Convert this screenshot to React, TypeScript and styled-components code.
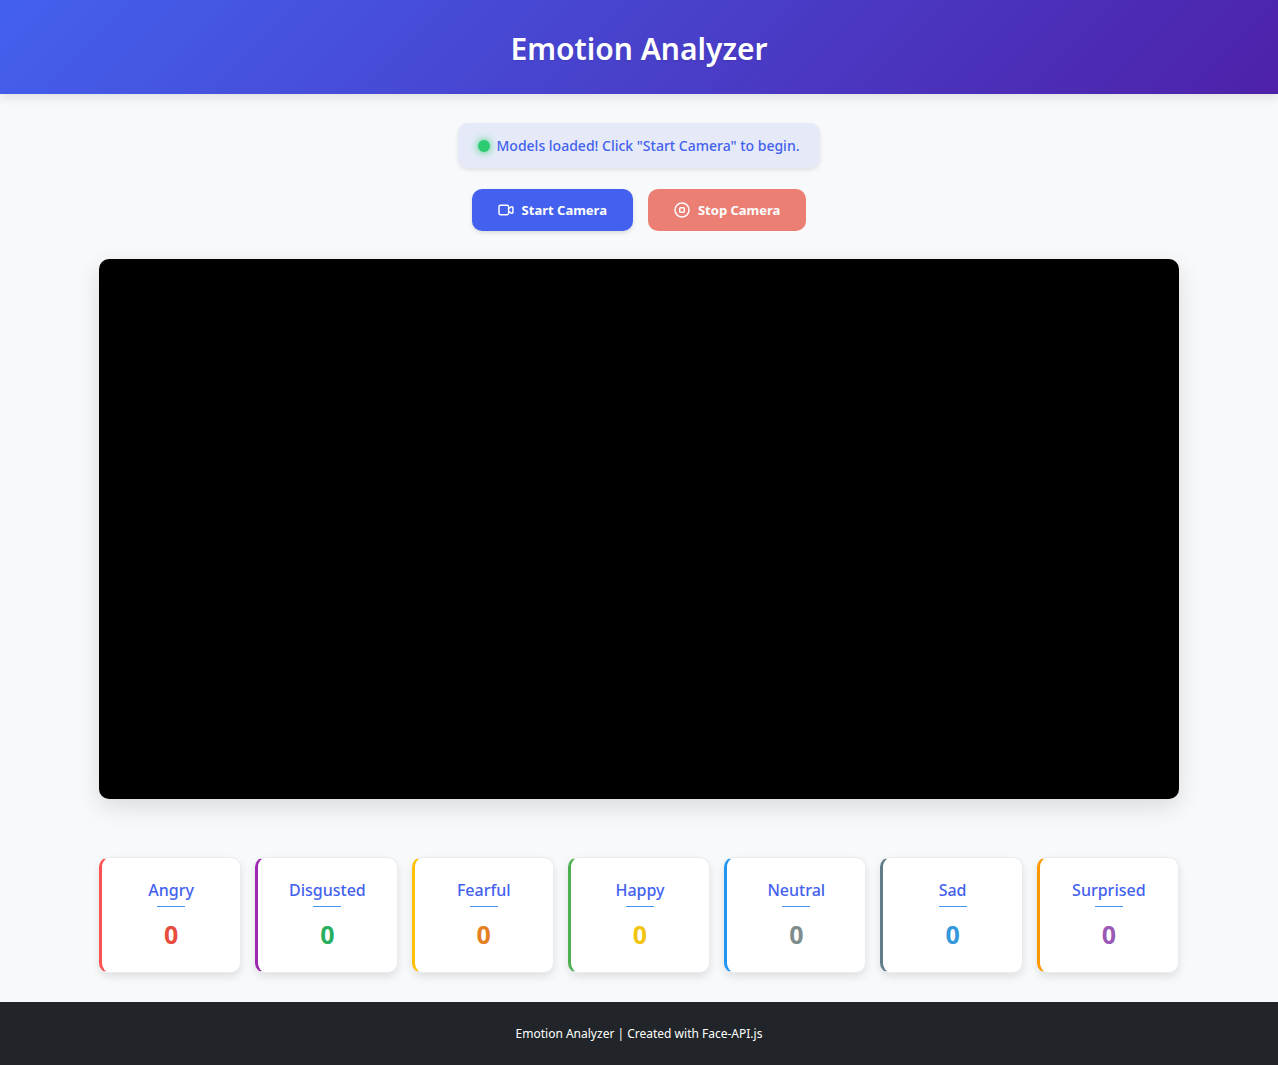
import React from "react";
import styled, { createGlobalStyle } from "styled-components";

const GlobalStyle = createGlobalStyle`
  *, *::before, *::after { box-sizing: border-box; }
  body {
    margin: 0;
    background: #f8f9fb;
    color: #212529;
    font-family: "Segoe UI", "Noto Sans", "Open Sans", sans-serif;
  }
`;

const Page = styled.div`
  min-height: 100vh;
  display: flex;
  flex-direction: column;
`;

const Header = styled.header`
  padding: 29px 20px 25px;
  background: linear-gradient(135deg, #4361ee, #4e21a9);
  box-shadow: 0 4px 10px rgba(0, 0, 0, 0.1);
  text-align: center;
`;

const Title = styled.h1`
  margin: 0;
  color: #fff;
  font-size: 30px;
  font-weight: 600;
  line-height: 40px;
  text-shadow: 0 1px 2px rgba(0, 0, 0, 0.1);
`;

const Main = styled.main`
  flex: 1;
  width: 100%;
  max-width: 1120px;
  margin: 0 auto;
  padding: 29px 20px;
  display: flex;
  flex-direction: column;
  align-items: center;
`;

const Status = styled.div`
  display: flex;
  align-items: center;
  gap: 6px;
  padding: 12px 20px 11px;
  border-radius: 10px;
  background: #e6eaf8;
  box-shadow: 0 2px 4px rgba(0, 0, 0, 0.1);
  color: #4361ee;
  font-size: 14px;
  font-weight: 500;
  line-height: 22px;
`;

const StatusDot = styled.span`
  width: 12px;
  height: 12px;
  border-radius: 50%;
  background: #2ecc71;
  box-shadow: 0 0 8px #2ecc71;
`;

const Controls = styled.div`
  display: flex;
  flex-wrap: wrap;
  justify-content: center;
  gap: 15px;
  margin: 21px 0 28px;
`;

const ControlButton = styled.button<{ $color: string }>`
  display: inline-flex;
  align-items: center;
  gap: 8px;
  padding: 10px 26px;
  border: 0;
  border-radius: 10px;
  background: ${(p) => p.$color};
  box-shadow: 0 2px 4px rgba(0, 0, 0, 0.12);
  color: #fff;
  font-family: inherit;
  font-size: 13px;
  font-weight: 700;
  line-height: 22px;
  cursor: pointer;

  &:disabled {
    opacity: 0.7;
    box-shadow: none;
    cursor: not-allowed;
  }
`;

const Icon = styled.svg`
  width: 16px;
  height: 16px;
  fill: none;
  stroke: currentColor;
  stroke-linecap: round;
  stroke-linejoin: round;
`;

const VideoStage = styled.section`
  width: 100%;
  aspect-ratio: 2 / 1;
  border-radius: 10px;
  overflow: hidden;
  background: #000;
  box-shadow: 0 8px 24px rgba(0, 0, 0, 0.12);
`;

const Video = styled.video`
  display: block;
  width: 100%;
  height: 100%;
`;

const Results = styled.section`
  width: 100%;
  margin-top: 58px;
  display: grid;
  grid-template-columns: repeat(auto-fit, minmax(130px, 1fr));
  gap: 14px;
`;

const Card = styled.article<{ $accent: string }>`
  display: flex;
  flex-direction: column;
  align-items: center;
  padding: 20px 12px;
  border: 1px solid #e9ecef;
  border-left: 3px solid ${(p) => p.$accent};
  border-radius: 10px;
  background: #fff;
  box-shadow: 0 4px 8px rgba(0, 0, 0, 0.1);
`;

const Emotion = styled.h2`
  display: flex;
  flex-direction: column;
  align-items: center;
  gap: 4px;
  margin: 0;
  color: #4361ee;
  font-size: 16px;
  font-weight: 500;
  line-height: 24px;

  &::after {
    content: "";
    width: 28px;
    height: 1px;
    background: #4895ef;
  }
`;

const Count = styled.p<{ $color: string }>`
  margin: 10px 0 0;
  color: ${(p) => p.$color};
  font-size: 25px;
  font-weight: 700;
  line-height: 35px;
`;

const Footer = styled.footer`
  padding: 20px;
  background: #212529;
  color: #fff;
  font-size: 12px;
  line-height: 23px;
  text-align: center;
`;

const emotions = [
  { name: "Angry", accent: "#ff5252", color: "#e74c3c" },
  { name: "Disgusted", accent: "#9c27b0", color: "#27ae60" },
  { name: "Fearful", accent: "#ffc107", color: "#e67e22" },
  { name: "Happy", accent: "#4caf50", color: "#f1c40f" },
  { name: "Neutral", accent: "#2196f3", color: "#7f8c8d" },
  { name: "Sad", accent: "#607d8b", color: "#3498db" },
  { name: "Surprised", accent: "#ff9800", color: "#9b59b6" },
];

export default function App() {
  return (
    <Page>
      <GlobalStyle />
      <Header>
        <Title>Emotion Analyzer</Title>
      </Header>
      <Main>
        <Status role="status">
          <StatusDot />
          <span>Models loaded! Click "Start Camera" to begin.</span>
        </Status>
        <Controls>
          <ControlButton type="button" $color="#4361ee">
            <Icon viewBox="0 0 16 16" strokeWidth="1.4" aria-hidden="true">
              <rect x="1" y="3.3" width="9.6" height="9.4" rx="1.4" />
              <path d="M10.6 6.6 13.3 4.9q1.5-.6 1.6.7v4.8q-.1 1.3-1.6.7L10.6 9.4" />
            </Icon>
            Start Camera
          </ControlButton>
          <ControlButton type="button" $color="#e74c3c" disabled>
            <Icon viewBox="0 0 16 16" strokeWidth="1.5" aria-hidden="true">
              <circle cx="8" cy="8" r="7" />
              <rect x="5.7" y="5.7" width="4.6" height="4.6" rx="0.9" />
            </Icon>
            Stop Camera
          </ControlButton>
        </Controls>
        <VideoStage aria-label="Camera view">
          <Video muted playsInline />
        </VideoStage>
        <Results aria-label="Emotion counts">
          {emotions.map((e) => (
            <Card key={e.name} $accent={e.accent}>
              <Emotion>{e.name}</Emotion>
              <Count $color={e.color}>0</Count>
            </Card>
          ))}
        </Results>
      </Main>
      <Footer>Emotion Analyzer | Created with Face-API.js</Footer>
    </Page>
  );
}
